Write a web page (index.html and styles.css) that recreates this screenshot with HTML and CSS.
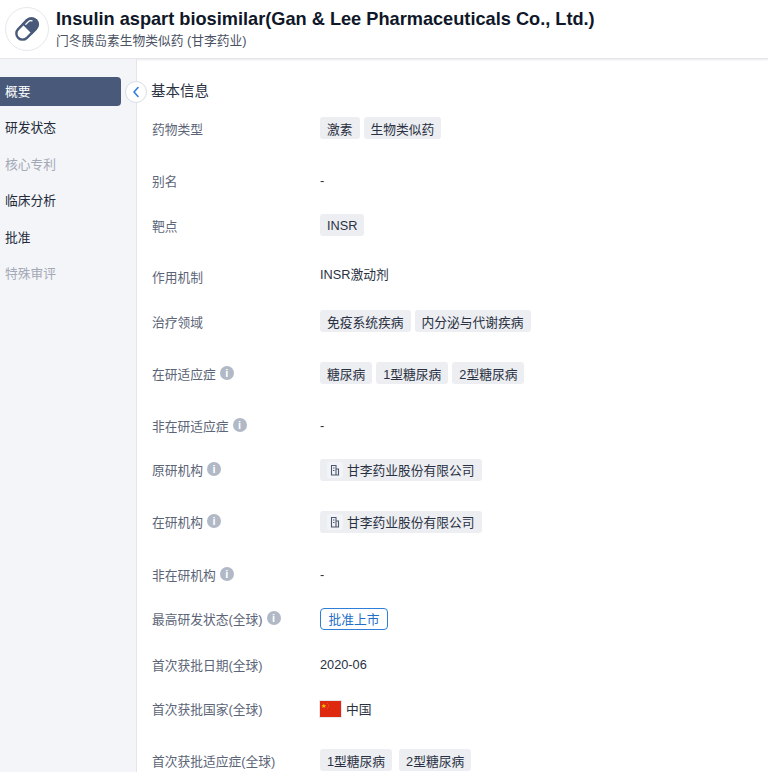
FILE: index.html
```html
<!DOCTYPE html>
<html lang="zh">
<head>
<meta charset="utf-8">
<title>Insulin aspart biosimilar</title>
<link rel="stylesheet" href="styles.css">
</head>
<body>
<header class="header">
  <div class="logo">
    <svg width="28" height="28" viewBox="0 0 28 28"><g transform="rotate(-45 14 14)"><rect x="1.500" y="7.800" width="25" height="12.400" rx="6.200" fill="#fff" stroke="#48597a" stroke-width="2.400"/><path d="M14 6.600h6.300a7.400 7.400 0 0 1 0 14.800H14z" fill="#48597a"/><path d="M16.500 9.800h3.600a3.600 3.600 0 0 1 3.200 2" fill="none" stroke="#fff" stroke-width="1.300" stroke-linecap="round"/></g></svg>
  </div>
  <div class="heading">
    <h1 class="title">Insulin aspart biosimilar(Gan &amp; Lee Pharmaceuticals Co., Ltd.)</h1>
    <p class="subtitle">门冬胰岛素生物类似药 (甘李药业)</p>
  </div>
</header>
<div class="page">
  <nav class="side">
    <a class="nav active">概要</a>
    <a class="nav">研发状态</a>
    <a class="nav muted">核心专利</a>
    <a class="nav">临床分析</a>
    <a class="nav">批准</a>
    <a class="nav muted">特殊审评</a>
    <span class="toggle"><svg width="8" height="12" viewBox="0 0 8 12"><path d="M6 1.500 2 6l4 4.500" fill="none" stroke="#2f7fe0" stroke-width="1.600" stroke-linecap="round" stroke-linejoin="round"/></svg></span>
  </nav>
  <main class="main">
    <h2 class="section">基本信息</h2>
    <div class="row h52"><div class="label">药物类型</div><div class="value"><span class="tag">激素</span><span class="tag">生物类似药</span></div></div>
    <div class="row h45"><div class="label">别名</div><div class="value low">-</div></div>
    <div class="row h51"><div class="label">靶点</div><div class="value"><span class="tag">INSR</span></div></div>
    <div class="row h45"><div class="label">作用机制</div><div class="value up">INSR激动剂</div></div>
    <div class="row h52"><div class="label">治疗领域</div><div class="value"><span class="tag">免疫系统疾病</span><span class="tag">内分泌与代谢疾病</span></div></div>
    <div class="row h52"><div class="label">在研适应症<i class="info">i</i></div><div class="value"><span class="tag">糖尿病</span><span class="tag">1型糖尿病</span><span class="tag">2型糖尿病</span></div></div>
    <div class="row h44"><div class="label">非在研适应症<i class="info">i</i></div><div class="value low">-</div></div>
    <div class="row h52"><div class="label">原研机构<i class="info">i</i></div><div class="value"><span class="tag org"><span class="orgicon"><svg width="10" height="12" viewBox="0 0 10 12"><path d="M1.500 11V1.500h4.500V11zM6 5h2.500v6H1M3 4h1.500M3 6.500h1.500" fill="none" stroke="#4d5870" stroke-width="1.100"/></svg></span>甘李药业股份有限公司</span></div></div>
    <div class="row h53"><div class="label">在研机构<i class="info">i</i></div><div class="value"><span class="tag org"><span class="orgicon"><svg width="10" height="12" viewBox="0 0 10 12"><path d="M1.500 11V1.500h4.500V11zM6 5h2.500v6H1M3 4h1.500M3 6.500h1.500" fill="none" stroke="#4d5870" stroke-width="1.100"/></svg></span>甘李药业股份有限公司</span></div></div>
    <div class="row h44"><div class="label">非在研机构<i class="info">i</i></div><div class="value low">-</div></div>
    <div class="row h46"><div class="label">最高研发状态(全球)<i class="info">i</i></div><div class="value"><span class="status">批准上市</span></div></div>
    <div class="row h44"><div class="label">首次获批日期(全球)</div><div class="value low">2020-06</div></div>
    <div class="row h52"><div class="label">首次获批国家(全球)</div><div class="value country"><svg class="flag" width="21" height="16" viewBox="0 0 21 16"><rect width="21" height="16" fill="#de2910"/><path d="M3.800 2.600l.6 1.700h1.800l-1.400 1.100.5 1.700-1.500-1-1.500 1 .5-1.700-1.400-1.100h1.800z" fill="#f5c800"/><g fill="#f0a000" opacity=".6"><circle cx="7.300" cy="2.300" r=".5"/><circle cx="8.400" cy="3.700" r=".5"/><circle cx="8.400" cy="5.500" r=".5"/><circle cx="7.300" cy="6.900" r=".5"/></g></svg>中国</div></div>
    <div class="row h52"><div class="label">首次获批适应症(全球)</div><div class="value wide"><span class="tag">1型糖尿病</span><span class="tag">2型糖尿病</span></div></div>
  </main>
</div>
</body>
</html>
```
FILE: styles.css
```css
* { box-sizing: border-box; }
html, body { margin: 0; padding: 0; }
body {
  height: 772px;
  overflow: hidden;
  background: #fff;
  color: #2a3142;
  font-family: "Liberation Sans", "Noto Sans CJK SC", sans-serif;
  font-size: 12.750px;
}
.header {
  height: 59px;
  display: flex;
  align-items: center;
  gap: 7px;
  padding: 0 0 1px 5px;
  border-bottom: 1px solid #e4e6ea;
  box-shadow: 0 1px 2px rgba(30, 40, 60, .1);
  position: relative;
}
.logo {
  width: 44px;
  height: 44px;
  border: 1px solid #e6e8ec;
  border-radius: 50%;
  display: flex;
  align-items: center;
  justify-content: center;
}
.heading { display: flex; flex-direction: column; gap: 1px; }
.title { margin: 0; font-size: 18.200px; line-height: 24px; font-weight: 700; color: #0f1729; white-space: nowrap; }
.subtitle { margin: 0; font-size: 12.750px; line-height: 18px; color: #4a5264; }
.page { display: flex; height: 713px; }
.side {
  width: 137px;
  flex: none;
  background: #f4f5f8;
  border-right: 1px solid #e3e5ea;
  padding: 18px 15px 0 0;
  position: relative;
}
.nav {
  display: block;
  height: 29px;
  line-height: 29px;
  margin-bottom: 7.400px;
  padding-left: 5px;
  color: #232a3a;
}
.nav.active { background: #48597a; color: #fff; border-radius: 0 4px 4px 0; }
.nav.muted { color: #a3a9b6; }
.toggle {
  position: absolute;
  left: 125px;
  top: 22px;
  width: 22px;
  height: 22px;
  border: 1px solid #d9dde4;
  border-radius: 50%;
  background: #fff;
  display: flex;
  align-items: center;
  justify-content: center;
}
.main { flex: 1; padding: 22px 0 0 15px; }
.section { margin: 0 0 0 -1px; height: 36px; font-size: 14.500px; line-height: 20px; font-weight: 400; color: #2a3142; }
.row { display: flex; align-items: flex-start; }
.h44 { height: 44px; }
.h45 { height: 45px; }
.h46 { height: 46px; }
.h51 { height: 51px; }
.h52 { height: 52px; }
.h53 { height: 53px; }
.label {
  width: 168px;
  flex: none;
  display: flex;
  align-items: center;
  gap: 4px;
  height: 22px;
  color: #5c6577;
  white-space: nowrap;
}
.value { display: flex; align-items: center; gap: 4px; height: 22px; color: #2a3142; }
.up { position: relative; top: -3px; }
.low { padding-top: 1px; }
.wide { gap: 7px; }
.tag {
  display: inline-flex;
  align-items: center;
  height: 22px;
  padding: 0 7px;
  background: #eceef2;
  border-radius: 3px;
  color: #2a3142;
}
.org { gap: 4px; padding: 0 7px 0 7px; margin-top: 1px; }
.orgicon {
  width: 16px;
  height: 16px;
  display: flex;
  align-items: center;
  justify-content: center;
  background: #f3f4f7;
  border-radius: 3px;
}
.info {
  width: 14px;
  height: 14px;
  border-radius: 50%;
  background: #b1b8c6;
  color: #fff;
  font-size: 11px;
  line-height: 14px;
  font-weight: 700;
  font-style: normal;
  text-align: center;
}
.status {
  display: inline-flex;
  align-items: center;
  height: 22px;
  margin-top: 1px;
  padding: 0 7.500px;
  border: 1px solid #2f7fd8;
  border-radius: 4px;
  color: #1f6fc8;
}
.country { gap: 5px; }
.flag { outline: 1px solid #e6e8ec; margin-top: 2px; }
```
